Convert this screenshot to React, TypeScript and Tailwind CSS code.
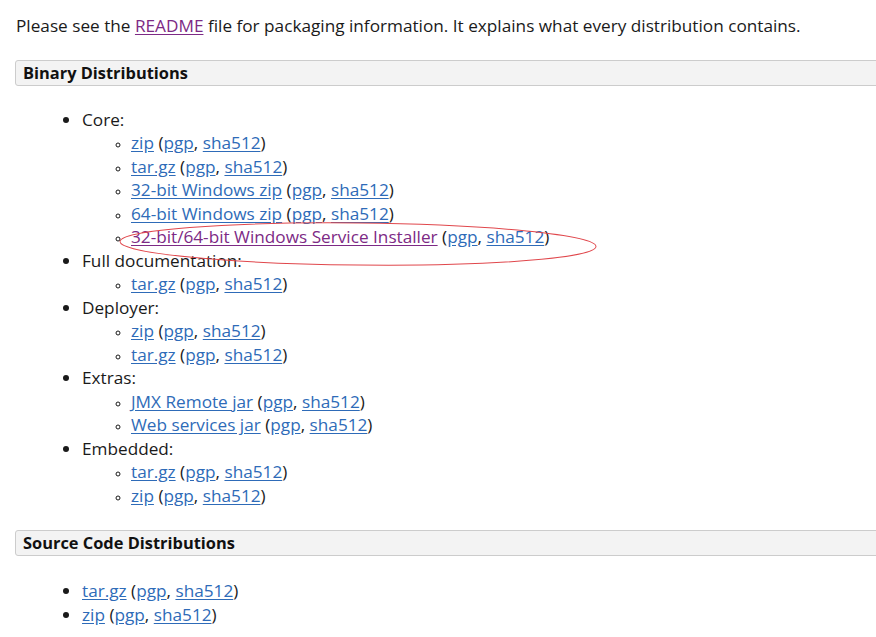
import React from "react";

const blue = "text-[#2e6bb8] underline underline-offset-2";
const purple = "text-[#7d2a85] underline underline-offset-2";

type Item = { label: string; visited?: boolean };

function Links({ item }: { item: Item }) {
  return (
    <>
      <a href="#" className={item.visited ? purple : blue}>
        {item.label}
      </a>{" "}
      (<a href="#" className={blue}>pgp</a>, <a href="#" className={blue}>sha512</a>)
    </>
  );
}

const binary: { title: string; items: Item[] }[] = [
  {
    title: "Core:",
    items: [
      { label: "zip" },
      { label: "tar.gz" },
      { label: "32-bit Windows zip" },
      { label: "64-bit Windows zip" },
      { label: "32-bit/64-bit Windows Service Installer", visited: true },
    ],
  },
  { title: "Full documentation:", items: [{ label: "tar.gz" }] },
  { title: "Deployer:", items: [{ label: "zip" }, { label: "tar.gz" }] },
  { title: "Extras:", items: [{ label: "JMX Remote jar" }, { label: "Web services jar" }] },
  { title: "Embedded:", items: [{ label: "tar.gz" }, { label: "zip" }] },
];

function SectionHeader({ children }: { children: React.ReactNode }) {
  return (
    <div className="ml-[15px] w-[900px] h-[26px] flex items-center px-[7px] bg-[#f3f3f3] border border-[#cccccc] rounded-[3px] text-[16.4px] font-bold text-[#111]">
      {children}
    </div>
  );
}

export default function App() {
  return (
    <div
      className="relative w-[876px] h-[637px] overflow-hidden bg-white text-[17.2px] leading-[23.5px] text-[#1a1a1a]"
      style={{ fontFamily: '"Open Sans", "Noto Sans", sans-serif' }}
    >
      <p className="pl-[16px] pt-[14px]">
        Please see the <a href="#" className={purple}>README</a> file for packaging information. It explains what every distribution contains.
      </p>

      <div className="mt-[22px]">
        <SectionHeader>Binary Distributions</SectionHeader>
      </div>

      <ul className="mt-[22px] pl-[82px] list-disc">
        {binary.map((g) => (
          <li key={g.title}>
            {g.title}
            <ul className="pl-[49px] list-[circle] marker:text-[12px]">
              {g.items.map((it, i) => (
                <li key={i}>
                  <Links item={it} />
                </li>
              ))}
            </ul>
          </li>
        ))}
      </ul>

      <div className="mt-[23px]">
        <SectionHeader>Source Code Distributions</SectionHeader>
      </div>

      <ul className="mt-[23px] pl-[82px] list-disc">
        <li>
          <Links item={{ label: "tar.gz" }} />
        </li>
        <li>
          <Links item={{ label: "zip" }} />
        </li>
      </ul>

      <svg className="absolute left-0 top-0 pointer-events-none" width="876" height="637">
        <ellipse
          cx="358"
          cy="244"
          rx="238"
          ry="21"
          transform="rotate(0.6 358 244)"
          fill="none"
          stroke="#e0474c"
          strokeWidth="1"
        />
      </svg>
    </div>
  );
}
